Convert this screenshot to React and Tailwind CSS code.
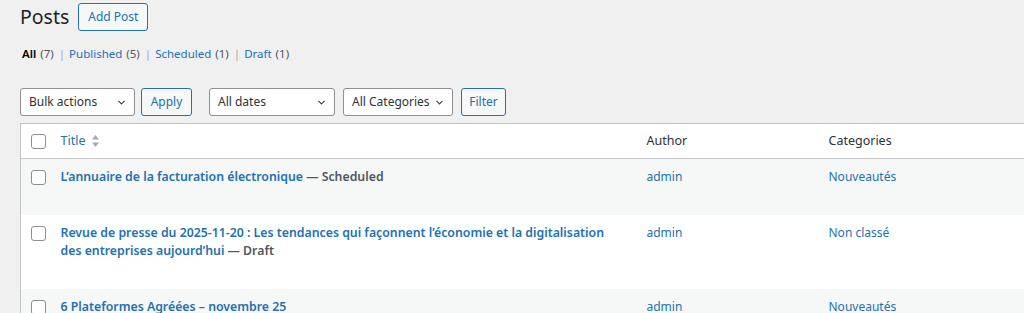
import React from "react";

const Chevron = () => (
  <svg width="11" height="11" viewBox="0 0 20 20" className="shrink-0">
    <path d="M4.5 7 L10 12.5 L15.5 7" fill="none" stroke="#3c434a" strokeWidth="2" />
  </svg>
);

const Select = ({ label, w }) => (
  <div className={`${w} h-[28px] flex items-center justify-between bg-white border border-[#8c8f94] rounded-[3px] pl-[8px] pr-[7px] text-[12px] text-[#2c3338]`}>
    <span>{label}</span>
    <Chevron />
  </div>
);

const Btn = ({ label, w }) => (
  <div className={`${w} h-[28px] flex items-center justify-center bg-[#f6f7f7] border border-[#2271b1] rounded-[3px] text-[12px] text-[#2271b1]`}>
    {label}
  </div>
);

const Check = () => (
  <div className="w-[15px] h-[15px] border border-[#8c8f94] rounded-[3px] bg-white" />
);

const Sep = () => <span className="ml-[5px] mr-[4px] text-[#a7aaad]">|</span>;

const rows = [
  { title: "L\u2019annuaire de la facturation électronique", state: "Scheduled", cat: "Nouveautés", striped: true },
  { title: "Revue de presse du 2025-11-20 : Les tendances qui façonnent l\u2019économie et la digitalisation des entreprises aujourd\u2019hui", state: "Draft", cat: "Non classé", striped: false },
  { title: "6 Plateformes Agréées – novembre 25", state: null, cat: "Nouveautés", striped: true },
];

export default function App() {
  return (
    <div className="w-[1024px] h-[313px] overflow-hidden bg-[#f0f0f1] font-['Noto_Sans',sans-serif] text-[#3c434a]">
      <div className="flex items-center pl-[20px] pt-[3px] gap-[9px]">
        <h1 className="text-[19.5px] leading-[28px] text-[#1d2327] font-normal">Posts</h1>
        <div className="w-[70px] h-[28px] flex items-center justify-center bg-[#f6f7f7] border border-[#2271b1] rounded-[3px] text-[12px] text-[#2271b1]">
          Add Post
        </div>
      </div>

      <div className="flex items-center pl-[22px] mt-[14px] h-[18px] text-[11.5px] text-[#50575e]">
        <span className="text-black font-semibold">All</span>
        <span className="ml-[4px]">(7)</span>
        <Sep />
        <span className="text-[#2271b1]">Published</span>
        <span className="ml-[4px]">(5)</span>
        <Sep />
        <span className="text-[#2271b1]">Scheduled</span>
        <span className="ml-[4px]">(1)</span>
        <Sep />
        <span className="text-[#2271b1]">Draft</span>
        <span className="ml-[4px]">(1)</span>
      </div>

      <div className="flex items-center pl-[20px] mt-[25px]">
        <Select label="Bulk actions" w="w-[115px]" />
        <div className="ml-[6px]"><Btn label="Apply" w="w-[51px]" /></div>
        <div className="ml-[17px]"><Select label="All dates" w="w-[126px]" /></div>
        <div className="ml-[8px]"><Select label="All Categories" w="w-[110px]" /></div>
        <div className="ml-[8px]"><Btn label="Filter" w="w-[45px]" /></div>
      </div>

      <div className="pl-[20px] mt-[7px]">
        <table className="w-[1100px] table-fixed border-collapse bg-white border border-[#c3c4c7]">
          <colgroup>
            <col className="w-[30px]" />
            <col className="w-[586px]" />
            <col className="w-[182px]" />
            <col />
          </colgroup>
          <thead>
            <tr className="h-[35px] border-b border-[#c3c4c7]">
              <th className="pl-[10px] align-middle">
                <Check />
              </th>
              <th className="px-[10px] text-left font-normal text-[12.5px]">
                <span className="flex items-center gap-[6px] text-[#2271b1]">
                  Title
                  <svg width="9" height="14" viewBox="0 0 9 14">
                    <path d="M4.5 1 L8 5.5 L1 5.5 Z" fill="#a7aaad" />
                    <path d="M4.5 13 L8 8.5 L1 8.5 Z" fill="#a7aaad" />
                  </svg>
                </span>
              </th>
              <th className="px-[10px] text-left font-normal text-[12.5px] text-[#2c3338]">Author</th>
              <th className="px-[10px] text-left font-normal text-[12.5px] text-[#2c3338]">Categories</th>
            </tr>
          </thead>
          <tbody>
            {rows.map((r, i) => (
              <tr key={i} className={r.striped ? "bg-[#f6f7f7]" : "bg-white"}>
                <td className="pl-[10px] pt-[11px] align-top">
                  <Check />
                </td>
                <td className="px-[10px] pt-[9px] pb-[7px] align-top">
                  <div className="max-w-[556px] text-[12.3px] leading-[18px]">
                    <span className="font-semibold text-[#2271b1]">{r.title}</span>
                    {r.state && (
                      <span className="font-semibold text-[#50575e]"> — {r.state}</span>
                    )}
                  </div>
                  <div className="h-[22px]" />
                </td>
                <td className="px-[10px] pt-[9px] align-top text-[12px] leading-[18px] text-[#2271b1]">admin</td>
                <td className="px-[10px] pt-[9px] align-top text-[12px] leading-[18px] text-[#2271b1]">{r.cat}</td>
              </tr>
            ))}
          </tbody>
        </table>
      </div>
    </div>
  );
}
